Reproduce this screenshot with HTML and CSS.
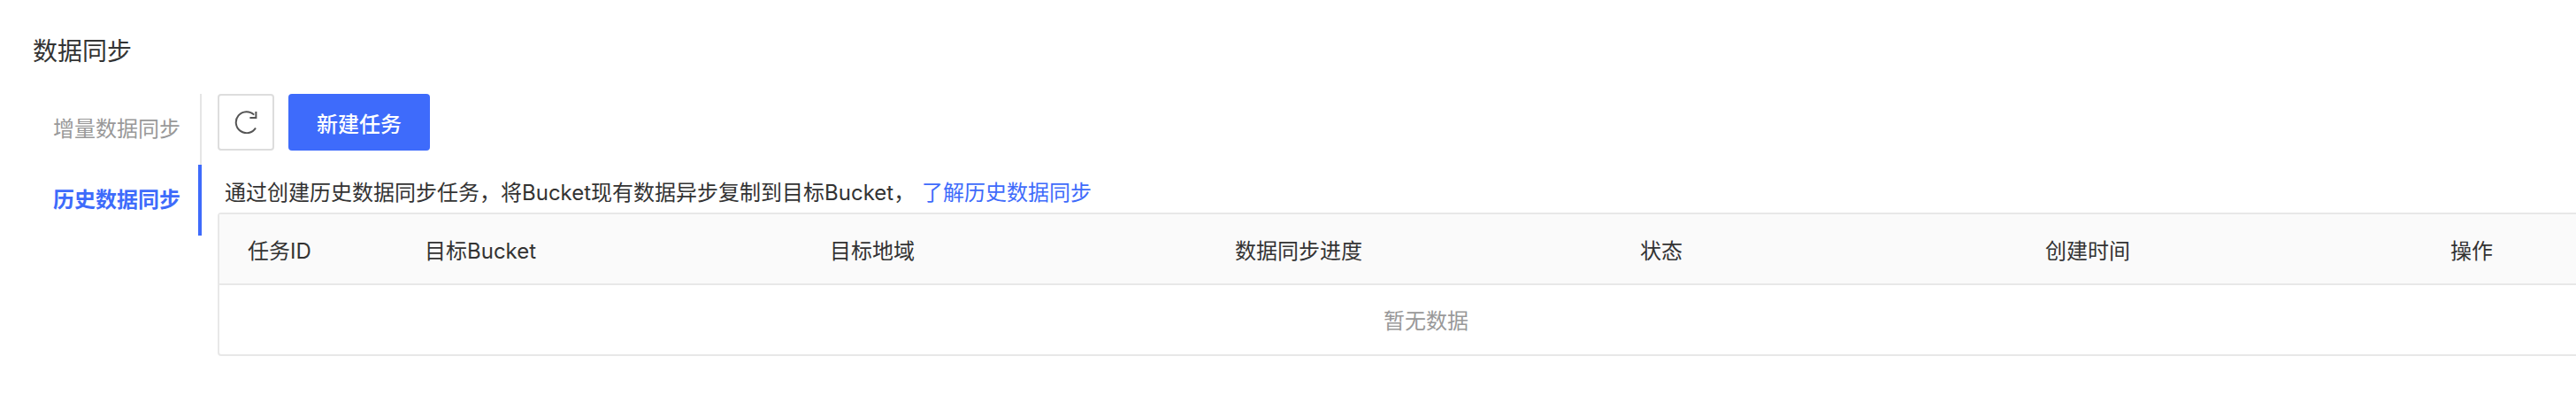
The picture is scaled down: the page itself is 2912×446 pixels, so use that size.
FILE: index.html
```html
<!DOCTYPE html>
<html lang="en">
<head>
    <meta charset="UTF-8">
    <title>数据同步</title>
    <link rel="stylesheet" href="styles.css">
</head>
<body>
<div class="page">
    <h1 class="title">数据同步</h1>
    <div class="layout">
        <!-- 左侧tab -->
        <ul class="tabs">
            <li>增量数据同步</li>
            <li class="current">历史数据同步</li>
        </ul>
        <div class="content">
            <div class="toolbar">
                <button class="btn-refresh" type="button">
                    <svg width="26" height="26" viewBox="0 0 26 26" fill="none" stroke="#555" stroke-width="2">
                        <path d="M24 19.4A12 12 0 1 1 22.2 4.6"/>
                        <path d="M24.4 1v7h-7"/>
                    </svg>
                </button>
                <button class="btn-primary" type="button">新建任务</button>
            </div>
            <p class="desc">通过创建历史数据同步任务，将Bucket现有数据异步复制到目标Bucket， <a href="#">了解历史数据同步</a></p>
            <table class="list">
                <colgroup>
                    <col class="col-id">
                    <col class="col-wide">
                    <col class="col-wide">
                    <col class="col-wide">
                    <col class="col-wide">
                    <col class="col-wide">
                    <col class="col-last">
                </colgroup>
                <thead>
                    <tr>
                        <th>任务ID</th>
                        <th>目标Bucket</th>
                        <th>目标地域</th>
                        <th>数据同步进度</th>
                        <th>状态</th>
                        <th>创建时间</th>
                        <th>操作</th>
                    </tr>
                </thead>
                <tbody>
                    <tr>
                        <td class="empty" colspan="7">暂无数据</td>
                    </tr>
                </tbody>
            </table>
        </div>
    </div>
</div>
</body>
</html>
```

FILE: styles.css
```css
* {
    margin: 0;
    padding: 0;
    box-sizing: border-box;
}

ul {
    list-style: none;
}

html, body {
    height: 100%;
    overflow: hidden;
    background-color: #fff;
}

body {
    font-family: "Inter", "Noto Sans CJK SC", sans-serif;
    font-size: 24px;
    color: #333;
}

.page {
    padding: 38px 0 0 37px;
}

.title {
    font-size: 28px;
    font-weight: 400;
    line-height: 40px;
    margin-bottom: 28px;
}

.layout {
    display: flex;
    align-items: flex-start;
}

.tabs {
    width: 191px;
    height: 160px;
    flex-shrink: 0;
    border-right: 2px solid #e5e5e5;
}

.tabs li {
    height: 80px;
    margin-right: -2px;
    padding-right: 20px;
    line-height: 80px;
    text-align: right;
    color: #999;
    border-right: 4px solid transparent;
}

.tabs li.current {
    color: #3e6bfb;
    font-weight: 700;
    border-right-color: #3e6bfb;
}

.content {
    margin-left: 18px;
    width: 2732px;
    flex-shrink: 0;
}

.toolbar {
    display: flex;
    gap: 16px;
    height: 64px;
}

.btn-refresh,
.btn-primary {
    height: 64px;
    border-radius: 4px;
    cursor: pointer;
    font-family: inherit;
    font-size: 24px;
}

.btn-refresh {
    width: 64px;
    background-color: #fff;
    border: 2px solid #ddd;
    display: flex;
    align-items: center;
    justify-content: center;
}

.btn-primary {
    width: 160px;
    background-color: #3e6bfb;
    border: none;
    color: #fff;
    font-weight: 500;
}

.desc {
    padding-left: 8px;
    margin-top: 28px;
    padding-top: 2px;
    line-height: 36px;
    height: 42px;
    white-space: nowrap;
}

.desc a {
    margin-left: 1px;
    color: #3e6bfb;
    text-decoration: none;
}

.list {
    width: 100%;
    table-layout: fixed;
    border-collapse: separate;
    border-spacing: 0;
    border: 2px solid #e8e8e8;
    border-radius: 4px;
}

.col-id {
    width: 200px;
}

.col-wide {
    width: 458px;
}

.list th {
    height: 80px;
    padding-left: 32px;
    background-color: #fafafa;
    border-bottom: 2px solid #e8e8e8;
    font-weight: 400;
    text-align: left;
}

.empty {
    height: 78px;
    padding-bottom: 2px;
    text-align: center;
    color: #999;
}
```
